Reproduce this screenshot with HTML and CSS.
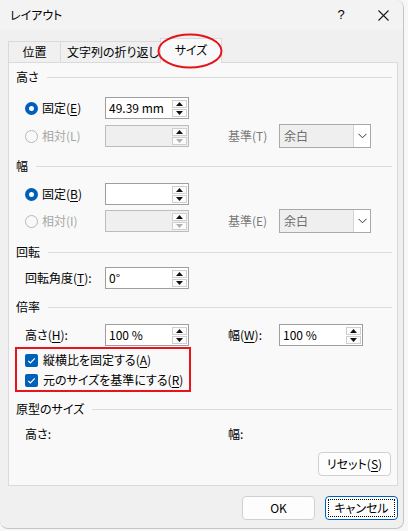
FILE: index.html
```html
<!DOCTYPE html>
<html lang="ja">
<head>
<meta charset="utf-8">
<title>レイアウト</title>
<link rel="stylesheet" href="styles.css">
</head>
<body>
<div class="dialog">
  <div class="titlebar">
    <span class="title">レイアウト</span>
    <span class="help">?</span>
    <span class="close"><svg width="11" height="11" viewBox="0 0 11 11"><path d="M0.5 0.5 L10.5 10.5 M10.5 0.5 L0.5 10.5" stroke="#1a1a1a" stroke-width="1.1" fill="none"/></svg></span>
  </div>

  <div class="tabs">
    <div class="tab t1">位置</div>
    <div class="tab t2">文字列の折り返し</div>
    <div class="tab active">サイズ</div>
  </div>

  <div class="panel">
    <div class="ghead mt6"><span>高さ</span></div>
    <div class="row mt11">
      <label class="opt"><span class="radio on"></span>固定(<u>E</u>)</label>
      <div class="spin"><span class="val">49.39 mm</span><div class="spinbtns"><span class="sb"><svg width="7" height="4" viewBox="0 0 7 4"><path d="M0 4 L3.5 0 L7 4Z" fill="#111"/></svg></span><span class="sb"><svg width="7" height="4" viewBox="0 0 7 4"><path d="M0 0 L3.5 4 L7 0Z" fill="#111"/></svg></span></div></div>
    </div>
    <div class="row mt4">
      <label class="opt dis"><span class="radio"></span>相対(L)</label>
      <div class="spin off"><span class="val"></span><div class="spinbtns"><span class="sb"><svg width="7" height="4" viewBox="0 0 7 4"><path d="M0 4 L3.5 0 L7 4Z" fill="#111"/></svg></span><span class="sb"><svg width="7" height="4" viewBox="0 0 7 4"><path d="M0 0 L3.5 4 L7 0Z" fill="#b0b0b0"/></svg></span></div></div>
      <span class="rlab dim">基準(T)</span>
      <div class="combo"><span class="cval">余白</span><span class="drop"><svg width="9" height="6" viewBox="0 0 9 6"><path d="M0.5 0.8 L4.5 4.8 L8.5 0.8" stroke="#333" stroke-width="1" fill="none"/></svg></span></div>
    </div>

    <div class="ghead mt10"><span>幅</span></div>
    <div class="row mt8">
      <label class="opt"><span class="radio on"></span>固定(<u>B</u>)</label>
      <div class="spin"><span class="val"></span><div class="spinbtns"><span class="sb"><svg width="7" height="4" viewBox="0 0 7 4"><path d="M0 4 L3.5 0 L7 4Z" fill="#111"/></svg></span><span class="sb"><svg width="7" height="4" viewBox="0 0 7 4"><path d="M0 0 L3.5 4 L7 0Z" fill="#111"/></svg></span></div></div>
    </div>
    <div class="row mt3">
      <label class="opt dis"><span class="radio"></span>相対(I)</label>
      <div class="spin off"><span class="val"></span><div class="spinbtns"><span class="sb"><svg width="7" height="4" viewBox="0 0 7 4"><path d="M0 4 L3.5 0 L7 4Z" fill="#111"/></svg></span><span class="sb"><svg width="7" height="4" viewBox="0 0 7 4"><path d="M0 0 L3.5 4 L7 0Z" fill="#b0b0b0"/></svg></span></div></div>
      <span class="rlab dim">基準(E)</span>
      <div class="combo"><span class="cval">余白</span><span class="drop"><svg width="9" height="6" viewBox="0 0 9 6"><path d="M0.5 0.8 L4.5 4.8 L8.5 0.8" stroke="#333" stroke-width="1" fill="none"/></svg></span></div>
    </div>

    <div class="ghead mt11"><span>回転</span></div>
    <div class="row mt6">
      <span class="opt">回転角度(<u>T</u>):</span>
      <div class="spin"><span class="val">0°</span><div class="spinbtns"><span class="sb"><svg width="7" height="4" viewBox="0 0 7 4"><path d="M0 4 L3.5 0 L7 4Z" fill="#111"/></svg></span><span class="sb"><svg width="7" height="4" viewBox="0 0 7 4"><path d="M0 0 L3.5 4 L7 0Z" fill="#111"/></svg></span></div></div>
    </div>

    <div class="ghead mt9"><span>倍率</span></div>
    <div class="row mt8">
      <span class="opt">高さ(<u>H</u>):</span>
      <div class="spin"><span class="val">100 %</span><div class="spinbtns"><span class="sb"><svg width="7" height="4" viewBox="0 0 7 4"><path d="M0 4 L3.5 0 L7 4Z" fill="#111"/></svg></span><span class="sb"><svg width="7" height="4" viewBox="0 0 7 4"><path d="M0 0 L3.5 4 L7 0Z" fill="#111"/></svg></span></div></div>
      <span class="rlab">幅(<u>W</u>):</span>
      <div class="spin"><span class="val">100 %</span><div class="spinbtns"><span class="sb"><svg width="7" height="4" viewBox="0 0 7 4"><path d="M0 4 L3.5 0 L7 4Z" fill="#111"/></svg></span><span class="sb"><svg width="7" height="4" viewBox="0 0 7 4"><path d="M0 0 L3.5 4 L7 0Z" fill="#111"/></svg></span></div></div>
    </div>
    <div class="highlight">
      <label class="check"><span class="cbox"><svg width="13" height="13" viewBox="0 0 13 13"><path d="M3.2 6.8 L5.4 9 L9.8 4.4" stroke="#fff" stroke-width="1.2" fill="none"/></svg></span>縦横比を固定する(<u>A</u>)</label>
      <label class="check"><span class="cbox"><svg width="13" height="13" viewBox="0 0 13 13"><path d="M3.2 6.8 L5.4 9 L9.8 4.4" stroke="#fff" stroke-width="1.2" fill="none"/></svg></span>元のサイズを基準にする(<u>R</u>)</label>
    </div>

    <div class="ghead mt9"><span>原型のサイズ</span></div>
    <div class="row mt5">
      <span class="opt">高さ:</span>
      <span class="gap"></span>
      <span class="rlab">幅:</span>
    </div>
    <div class="resetrow">
      <button class="btn">リセット(<u>S</u>)</button>
    </div>
  </div>

  <div class="footer">
    <button class="btn">OK</button>
    <button class="btn focus">キャンセル</button>
  </div>

  <svg class="mark" width="68" height="38" viewBox="0 0 68 38"><ellipse cx="34" cy="19" rx="31.5" ry="16.5" stroke="#e4141b" stroke-width="2" fill="none"/></svg>
</div>
</body>
</html>
```

FILE: styles.css
```css
* { box-sizing: border-box; margin: 0; padding: 0; }
html, body { width: 408px; height: 531px; overflow: hidden; }
body {
  background: #f7f7f7;
  font-family: "Noto Sans CJK JP", "Noto Sans", sans-serif;
  font-size: 12px;
  line-height: 16px;
  color: #000;
  font-feature-settings: "palt";
}
u { text-underline-offset: 2px; text-decoration-thickness: 1px; }

.dialog {
  position: relative;
  width: 404px;
  height: 529px;
  background: #f0f0f0;
  border: 1px solid #c4c4c4;
  border-top: none;
  border-left: none;
  border-radius: 0 8px 8px 8px;
  display: flex;
  flex-direction: column;
  overflow: hidden;
}

.titlebar {
  height: 30px;
  background: #f3f3f3;
  display: flex;
  align-items: center;
  padding-left: 10px;
  flex: none;
}
.title { flex: 1; }
.help { width: 14px; margin-right: 30px; text-align: center; font-family: "Liberation Sans", sans-serif; font-size: 13px; }
.close { width: 11px; height: 11px; margin-right: 14px; display: flex; }

.tabs {
  display: flex;
  align-items: flex-end;
  height: 24px;
  margin: 8px 0 0 8px;
  flex: none;
  position: relative;
  z-index: 1;
}
.tab {
  height: 21px;
  border: 1px solid #dadada;
  border-bottom: none;
  background: #f0f0f0;
  display: flex;
  align-items: center;
  justify-content: center;
  margin-right: -1px;
}
.t1 { width: 53px; }
.t2 { width: 101px; padding-left: 6px; justify-content: flex-start; }
.tab.active {
  width: 62px;
  height: 25px;
  margin-bottom: -1px;
  background: #f9f9f9;
  padding-bottom: 2px;
}

.panel {
  margin: 0 5px 0 8px;
  height: 424px;
  border: 1px solid #dadada;
  background: #f9f9f9;
  display: flex;
  flex-direction: column;
  flex: none;
}

.ghead {
  height: 16px;
  display: flex;
  align-items: center;
  padding: 0 5px 0 7px;
}
.ghead::after {
  content: "";
  flex: 1;
  height: 1px;
  background: #dcdcdc;
  margin-left: 8px;
}

.mt3 { margin-top: 3px; }
.mt4 { margin-top: 4px; }
.mt5 { margin-top: 5px; }
.mt6 { margin-top: 6px; }
.mt8 { margin-top: 8px; }
.mt9 { margin-top: 9px; }
.mt10 { margin-top: 10px; }
.mt11 { margin-top: 11px; }

.row {
  height: 24px;
  display: flex;
  align-items: center;
  padding-left: 16px;
}
.opt {
  width: 80px;
  display: flex;
  align-items: center;
}
.opt.dis { color: #a6a6a6; }
.radio {
  width: 13px;
  height: 13px;
  border-radius: 50%;
  border: 1px solid #b8b8b8;
  background: #f9f9f9;
  margin-right: 4px;
  flex: none;
}
.radio.on {
  border: 4px solid #005fb8;
  background: #fff;
}

.spin {
  width: 84px;
  height: 22px;
  border: 1px solid #9e9e9e;
  background: #fff;
  display: flex;
  align-items: center;
  padding-left: 3px;
  padding-right: 1px;
}
.spin.off { background: #efefef; border-color: #bcbcbc; }
.val { flex: 1; }
.spinbtns {
  display: flex;
  flex-direction: column;
  gap: 1px;
}
.sb {
  width: 15px;
  height: 8px;
  border: 1px solid #cfcfcf;
  background: #fcfcfc;
  display: flex;
  align-items: center;
  justify-content: center;
}

.rlab {
  width: 51px;
  margin-left: 39px;
}
.dim { color: #7a7a7a; }
.gap { width: 84px; }

.combo {
  width: 92px;
  height: 24px;
  border: 1px solid #a9a9a9;
  background: #efefef;
  display: flex;
  align-items: center;
  padding-left: 4px;
}
.cval { flex: 1; color: #6e6e6e; }
.drop {
  width: 17px;
  height: 22px;
  background: #fff;
  border-left: 1px solid #d4d4d4;
  display: flex;
  align-items: center;
  justify-content: center;
}

.highlight {
  margin-left: 6px;
  width: 176px;
  height: 45px;
  border: 2px solid #e8141b;
  padding: 1px 0 0 8px;
  display: flex;
  flex-direction: column;
}
.check {
  height: 21px;
  display: flex;
  align-items: center;
}
.cbox {
  width: 13px;
  height: 13px;
  border-radius: 2px;
  background: #005fb8;
  margin-right: 5px;
  display: flex;
  flex: none;
}

.resetrow {
  margin-top: 6px;
  display: flex;
  justify-content: flex-end;
  padding-right: 6px;
}

.btn {
  width: 73px;
  height: 24px;
  border: 1px solid #d0d0d0;
  border-radius: 4px;
  background: #fdfdfd;
  font: inherit;
  font-feature-settings: "palt";
  color: #000;
  position: relative;
}
.footer {
  display: flex;
  justify-content: flex-end;
  gap: 10px;
  padding: 10px 5px 0 0;
}
.btn.focus {
  border: 1px solid #005fb8;
}
.btn.focus::after {
  content: "";
  position: absolute;
  inset: 2px;
  border: 1px dotted #000;
  border-radius: 1px;
}

.mark {
  position: absolute;
  left: 156px;
  top: 32px;
  z-index: 2;
}
```
